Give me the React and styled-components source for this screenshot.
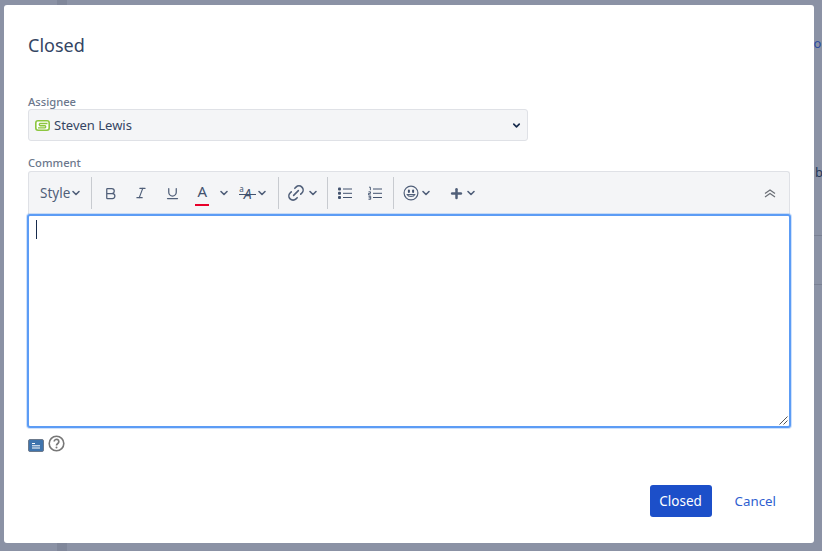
import React from "react";
import styled, { createGlobalStyle } from "styled-components";
import { Bold, ChevronDown, Italic, Link2, Plus, Underline } from "lucide-react";

const GlobalStyle = createGlobalStyle`
  html, body {
    margin: 0;
    padding: 0;
    background: #8b92a5;
  }

  * {
    box-sizing: border-box;
  }
`;

function Caret({ size = 12 }) {
  return <ChevronDown size={size} strokeWidth={3.2} color="#505f79" />;
}

function App() {
  return (
    <Page>
      <GlobalStyle />
      <BackdropStrip $top />
      <BackdropStrip />
      <BackdropText $x={807} $y={35} $color="#2c4aa0">vo</BackdropText>
      <BackdropText $x={815} $y={164} $color="#253858">b</BackdropText>
      <BackdropRule $y={235} />
      <BackdropRule $y={284} />
      <Dialog>
        <Title>Closed</Title>

        <Label>Assignee</Label>
        <AssigneeSelect>
          <svg width="15" height="11" viewBox="0 0 15 11">
            <rect x="0.8" y="0.8" width="13.4" height="9.4" rx="2.2" fill="#fff" stroke="#8cc63f" strokeWidth="1.6" />
            <path
              d="M12.5 3.5H5a1.2 1.2 0 0 0 0 2.2h5a1.2 1.2 0 0 1 0 2.2H3"
              fill="none"
              stroke="#8cc63f"
              strokeWidth="1.4"
            />
          </svg>
          <AssigneeName>Steven Lewis</AssigneeName>
          <SelectCaret>
            <ChevronDown size={11} strokeWidth={3.5} color="#172b4d" />
          </SelectCaret>
        </AssigneeSelect>

        <CommentLabel>Comment</CommentLabel>
        <Toolbar>
          <StyleGroup>
            <StyleButton>
              Style
              <Caret />
            </StyleButton>
          </StyleGroup>
          <FormatGroup>
            <ToolButton>
              <Bold size={15} strokeWidth={2} />
            </ToolButton>
            <ToolButton $wide>
              <Italic size={14} strokeWidth={2} />
            </ToolButton>
            <ToolButton>
              <Underline size={15} strokeWidth={2} />
            </ToolButton>
            <TextColor>
              A
              <ColorBar />
            </TextColor>
            <ToolButton $narrow>
              <Caret />
            </ToolButton>
            <ClearFormat>
              <ClearGlyph>
                <SmallA>a</SmallA>
                <SlantA>A</SlantA>
              </ClearGlyph>
              <Caret />
            </ClearFormat>
          </FormatGroup>
          <LinkGroup>
            <ToolCluster>
              <Link2 size={20} strokeWidth={1.9} style={{ transform: "rotate(-45deg)" }} />
              <Caret />
            </ToolCluster>
          </LinkGroup>
          <ListGroup>
            <ToolButton>
              <svg width="16" height="14" viewBox="0 0 16 14" fill="#42526e">
                <rect x="1" y="1.5" width="3" height="3" rx="1" />
                <rect x="1" y="5.8" width="3" height="3" rx="1" />
                <rect x="1" y="10" width="3" height="3" rx="1" />
                <path d="M6 3h9M6 7.3h9M6 11.5h9" stroke="#42526e" strokeWidth="1" />
              </svg>
            </ToolButton>
            <ToolButton>
              <svg width="16" height="14" viewBox="0 0 16 14">
                <path
                  d="M2 1.2h1.4v3M1.5 5.8h2v1.6h-2v1.5h2.2M1.5 10.3h2.2v3h-2.2M1.7 11.8h2"
                  fill="none"
                  stroke="#42526e"
                  strokeWidth="0.9"
                />
                <path d="M6 3h9M6 7.3h9M6 11.5h9" stroke="#42526e" strokeWidth="1" />
              </svg>
            </ToolButton>
          </ListGroup>
          <InsertGroup>
            <ToolCluster>
              <svg width="16" height="16" viewBox="0 0 16 16">
                <circle cx="8" cy="8" r="6.9" fill="none" stroke="#505f79" strokeWidth="1.2" />
                <rect x="4.9" y="4.6" width="2" height="3.4" rx="1" fill="#42526e" />
                <rect x="9.1" y="4.6" width="2" height="3.4" rx="1" fill="#42526e" />
                <path d="M4.2 9.6c1 2.6 6.6 2.6 7.6 0z" fill="#fff" stroke="#505f79" strokeWidth="1.1" />
              </svg>
              <Caret />
            </ToolCluster>
            <PlusCluster>
              <Plus size={15} strokeWidth={4} />
              <Caret />
            </PlusCluster>
          </InsertGroup>
          <Collapse>
            <svg width="12" height="9" viewBox="0 0 12 9">
              <path d="M1 4.5L6 1l5 3.5M1 8L6 4.5 11 8" fill="none" stroke="#6b6f76" strokeWidth="1.2" />
            </svg>
          </Collapse>
        </Toolbar>

        <Editor>
          <TextCursor />
          <Grip width="9" height="9" viewBox="0 0 9 9">
            <path d="M8.5 0.5L0.5 8.5M8.5 4.5L4.5 8.5" stroke="#555" strokeWidth="1" />
          </Grip>
        </Editor>

        <EditorFooter>
          <svg width="16" height="13" viewBox="0 0 16 13">
            <rect x="0.5" y="0.5" width="15" height="12" rx="1.5" fill="#3f74ad" stroke="#6c7a8c" />
            <path d="M4 4.5h3M4 6.8h8M4 9h8" stroke="#fff" strokeWidth="1" />
          </svg>
          <svg width="17" height="17" viewBox="0 0 17 17">
            <circle cx="8.5" cy="8.5" r="7.3" fill="none" stroke="#777" strokeWidth="1.6" />
            <path
              d="M6.2 6.6a2.3 2.3 0 1 1 3.6 1.9c-.9.6-1.3 1-1.3 2"
              fill="none"
              stroke="#777"
              strokeWidth="1.7"
            />
            <circle cx="8.5" cy="12.6" r="1" fill="#777" />
          </svg>
        </EditorFooter>

        <Actions>
          <PrimaryButton>Closed</PrimaryButton>
          <CancelLink>Cancel</CancelLink>
        </Actions>
      </Dialog>
    </Page>
  );
}

const Page = styled.div`
  position: relative;
  width: 822px;
  height: 551px;
  overflow: hidden;
  padding: 5px 8px 8px 4px;
  background: #8b92a5;
  font-family: "Noto Sans", "Open Sans", sans-serif;
`;

const BackdropStrip = styled.div`
  position: absolute;
  left: 57px;
  ${(p) => (p.$top ? "top: 0; height: 5px;" : "bottom: 0; height: 8px;")}
  width: 10px;
  background: #80879a;
`;

const BackdropText = styled.span`
  position: absolute;
  left: ${(p) => p.$x}px;
  top: ${(p) => p.$y}px;
  color: ${(p) => p.$color};
  font-size: 13px;
  line-height: 16px;
`;

const BackdropRule = styled.div`
  position: absolute;
  left: 814px;
  right: 0;
  top: ${(p) => p.$y}px;
  height: 1px;
  background: #7a8193;
`;

const Dialog = styled.div`
  position: relative;
  width: 810px;
  height: 538px;
  padding: 0 24px;
  display: flex;
  flex-direction: column;
  background: #fff;
  border-radius: 3px;
`;

const Title = styled.h1`
  margin: 26px 0 0;
  height: 28px;
  color: #344563;
  font-size: 18px;
  font-weight: 400;
  line-height: 28px;
`;

const Label = styled.label`
  margin-top: 36px;
  height: 14px;
  color: #6b778c;
  font-size: 11.2px;
  font-weight: 500;
  line-height: 14px;
`;

const CommentLabel = styled(Label)`
  margin-top: 15px;
`;

const AssigneeSelect = styled.div`
  display: flex;
  align-items: center;
  gap: 4px;
  width: 500px;
  height: 32px;
  padding: 0 5px 0 6px;
  background: #f4f5f7;
  border: 1px solid #dfe1e6;
  border-radius: 3px;
`;

const AssigneeName = styled.span`
  color: #344563;
  font-size: 13px;
`;

const SelectCaret = styled.span`
  display: flex;
  margin-left: auto;
`;

const Toolbar = styled.div`
  display: flex;
  align-items: center;
  height: 43px;
  width: 762px;
  margin-top: 1px;
  padding: 0 5px;
  color: #505f79;
  background: #f4f5f7;
  border: 1px solid #dfe1e6;
  border-bottom: none;
  border-radius: 3px 3px 0 0;
`;

const ToolGroup = styled.div`
  display: flex;
  align-items: center;
  height: 32px;
  border-right: 1px solid #c8cbd0;
`;

const StyleGroup = styled(ToolGroup)`
  padding: 0 9px 0 6px;
`;

const FormatGroup = styled(ToolGroup)`
  padding: 0 8px 0 3px;
`;

const LinkGroup = styled(ToolGroup)`
  padding: 0 6px 0 6px;
`;

const ListGroup = styled(ToolGroup)`
  padding: 0 3px 0 2px;
`;

const InsertGroup = styled(ToolGroup)`
  padding: 0 5px 0 8px;
  border-right: none;
`;

const ToolButton = styled.div`
  display: flex;
  align-items: center;
  justify-content: center;
  width: ${(p) => (p.$narrow ? "14px" : p.$wide ? "32px" : "30px")};
  height: 28px;
`;

const StyleButton = styled.div`
  display: flex;
  align-items: center;
  height: 28px;
  color: #505f79;
  font-size: 13.5px;
`;

const TextColor = styled.div`
  position: relative;
  width: 30px;
  height: 28px;
  text-align: center;
  color: #42526e;
  font-size: 15px;
  line-height: 24px;
`;

const ColorBar = styled.span`
  position: absolute;
  left: 8px;
  bottom: 1px;
  width: 14px;
  height: 2px;
  background: #e8002a;
`;

const ClearFormat = styled.div`
  display: flex;
  align-items: center;
  gap: 0;
  margin-left: 8px;
  padding-right: 2px;
`;

const ClearGlyph = styled.div`
  position: relative;
  display: flex;
  align-items: flex-start;
  width: 17px;
  height: 18px;
  color: #42526e;

  &::after {
    content: "";
    position: absolute;
    left: 0;
    right: 0;
    top: 10px;
    height: 1px;
    background: #42526e;
  }
`;

const SmallA = styled.span`
  font-size: 8px;
  line-height: 10px;
`;

const SlantA = styled.span`
  margin-top: 2px;
  font-size: 14px;
  font-style: italic;
  line-height: 16px;
`;

const ToolCluster = styled.div`
  display: flex;
  align-items: center;
  gap: 1px;
  padding: 0 2px 0 1px;
  height: 28px;
`;

const PlusCluster = styled(ToolCluster)`
  margin-left: 14px;
`;

const Collapse = styled.div`
  display: flex;
  margin-left: auto;
  padding-right: 8px;
`;

const Editor = styled.div`
  position: relative;
  width: 764px;
  height: 214px;
  margin-left: -1px;
  background: #fff;
  border: 2px solid #5c9cf5;
  border-radius: 3px;
  box-shadow: 0 0 0 1px rgba(92, 156, 245, 0.3);
`;

const TextCursor = styled.div`
  width: 1px;
  height: 19px;
  margin: 4px 0 0 7px;
  background: #172b4d;
`;

const Grip = styled.svg`
  position: absolute;
  right: 1px;
  bottom: 1px;
`;

const EditorFooter = styled.div`
  display: flex;
  align-items: flex-start;
  gap: 4px;
  margin-top: 7px;
  height: 17px;

  svg:first-child {
    margin-top: 4px;
  }
`;

const Actions = styled.div`
  display: flex;
  align-items: center;
  justify-content: flex-end;
  gap: 23px;
  width: 748px;
  margin-top: 33px;
`;

const PrimaryButton = styled.button`
  width: 62px;
  height: 32px;
  padding: 0;
  color: #fff;
  background: #1c4fc9;
  border: none;
  border-radius: 3px;
  font-family: inherit;
  font-size: 13.5px;
`;

const CancelLink = styled.a`
  color: #2f5fd0;
  font-size: 13.3px;
`;

export default App;
